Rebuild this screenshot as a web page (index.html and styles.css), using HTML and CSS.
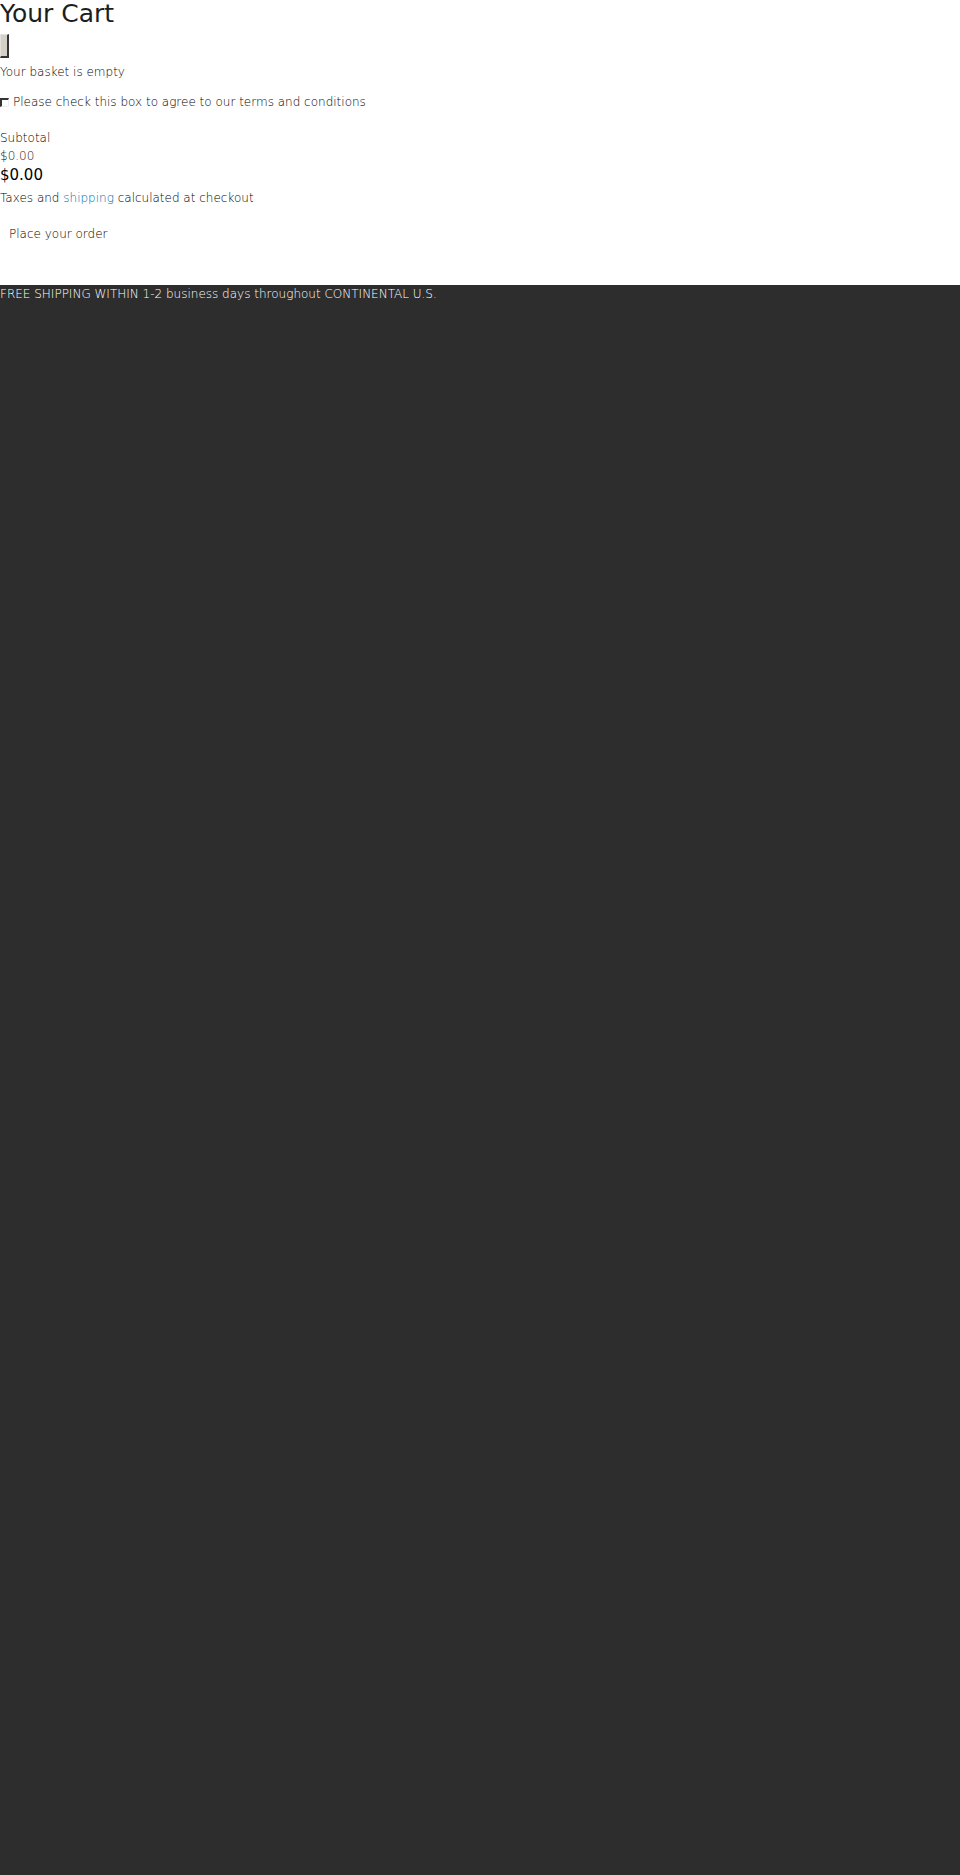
FILE: index.html
```html
<!DOCTYPE html>
<html lang="en">
<head>
  <meta charset="UTF-8">
  <meta name="viewport" content="width=device-width, initial-scale=1.0">
  <title>Your Cart</title>
  <link rel="stylesheet" href="styles.css">
</head>
<body>
  <aside class="cart">
    <header>
      <h3 class="cart-title">Your Cart</h3>
      <button class="cart-close" type="button" aria-label="Close cart"></button>
    </header>

    <p class="cart-empty">Your basket is empty</p>

    <div class="cart-terms">
      <input class="terms-box" type="checkbox" id="terms">
      <label for="terms">Please check this box to agree to our terms and conditions</label>
    </div>

    <div class="cart-totals">
      <div>Subtotal</div>
      <div class="price-old">$0.00</div>
      <div class="price">$0.00</div>
    </div>

    <p class="cart-note">Taxes and <a href="#">shipping</a> calculated at checkout</p>
    <button class="checkout-button" type="submit">Place your order</button>
  </aside>

  <main class="page">
    <div class="announcement">FREE SHIPPING WITHIN 1-2 business days throughout CONTINENTAL U.S.</div>
  </main>
</body>
</html>
```
FILE: styles.css
```css
html, body {
  height: 100%;
}

body {
  display: flex;
  flex-direction: column;
  margin: 0;
  font-family: "DejaVu Sans", sans-serif;
  font-size: 12px;
  font-weight: 200;
  line-height: 18px;
  color: #000;
  background-color: #fff;
}

.cart {
  padding-bottom: 42px;
}

.cart-title {
  margin: 0 0 6px;
  font-size: 25px;
  font-weight: 400;
  line-height: 28px;
  color: #1c1d1d;
}

/* old style bevelled button without a label */
.cart-close {
  display: block;
  width: 9px;
  height: 24px;
  padding: 0;
  border: 1px solid #e4e2dc;
  border-right: 2px solid #333;
  border-bottom: 2px solid #333;
  border-radius: 0;
  background-color: #d4d0c8;
}

.cart-empty {
  margin: 5px 0 12px;
}

.cart-terms {
  display: flex;
  align-items: center;
  gap: 4px;
  margin-bottom: 18px;
}

.terms-box {
  appearance: none;
  width: 9px;
  height: 9px;
  margin: 0;
  border: 1px solid #eee;
  border-top: 2px solid #333;
  border-left: 2px solid #333;
  background-color: #fff;
}

.price-old {
  color: #222;
}

.price {
  font-size: 15px;
  font-weight: 400;
  line-height: 20px;
}

.cart-note {
  margin: 4px 0 18px;
}

.cart-note a {
  color: #006fa8;
  text-decoration: none;
}

.checkout-button {
  display: block;
  padding: 0 9px;
  border: 0;
  background: none;
  font: inherit;
  color: inherit;
}

.page {
  flex: 1;
  background-color: #2d2d2d;
  color: #fff;
}
```
